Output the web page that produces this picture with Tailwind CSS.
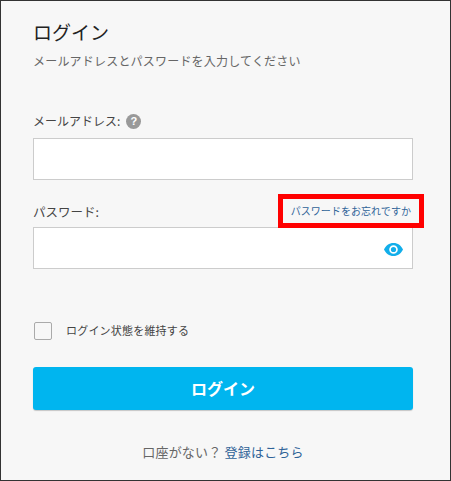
<!DOCTYPE html>
<html lang="ja">
<head>
  <meta charset="UTF-8" />
  <title>ログイン</title>
  <script src="https://cdn.jsdelivr.net/npm/@tailwindcss/browser@4"></script>
</head>
<body class="bg-white">
  <div class="w-[451px] h-[481px] bg-[#f7f7f7] border border-[#333333] px-[32px] pt-[20px] overflow-hidden font-['Noto_Sans_CJK_JP','Liberation_Sans',sans-serif]">
    <h1 class="text-[19px] leading-[22px] text-[#222222] font-normal">ログイン</h1>
    <p class="mt-[9px] text-[12px] leading-[18px] text-[#666666] tracking-[0.2px]">メールアドレスとパスワードを入力してください</p>

    <div class="mt-[41px] flex items-center gap-[6px] h-[20px]">
      <label class="text-[12px] text-[#444444]">メールアドレス:</label>
      <span class="w-[15px] h-[15px] rounded-full bg-[#999999] text-white text-[11px] leading-[15px] font-bold text-center font-['Liberation_Sans',sans-serif]">?</span>
    </div>
    <div class="mt-[7px] w-[380px] h-[42px] bg-white border border-[#cccccc]"></div>

    <div class="mt-[14px] flex items-center justify-between w-[380px] h-[33px]">
      <label class="pt-[3px] text-[12.5px] text-[#444444]">パスワード:</label>
      <a class="relative z-10 mr-[-6px] text-[10px] text-[#2f6398] outline-[5px] outline-[#ff0000] px-[8px] py-[5px] leading-[14px] tracking-[0.05px]" href="#">パスワードをお忘れですか</a>
    </div>
    <div class="relative w-[380px] h-[42px] bg-white border border-[#cccccc]">
      <svg class="absolute right-[9px] top-[15px]" width="19" height="13" viewBox="0 0 19 13">
        <path fill="#12aeea" fill-rule="evenodd" d="M9.5 0C5.2 0 1.6 2.7 0 6.5 1.6 10.3 5.2 13 9.5 13s7.9-2.7 9.500-6.500C17.400 2.700 13.800 0 9.500 0zm0 10.800a4.300 4.300 0 1 1 0-8.600 4.300 4.300 0 0 1 0 8.600zm0-6.900a2.600 2.600 0 1 0 0 5.200 2.600 2.600 0 0 0 0-5.200z"/>
      </svg>
    </div>

    <div class="mt-[52px] flex items-center gap-[14px] h-[20px] pl-[1px]">
      <span class="w-[18px] h-[18px] rounded-[2px] border border-[#aaaaaa] bg-[#f7f7f7]"></span>
      <span class="mb-[2px] text-[11px] tracking-[0.2px] text-[#444444]">ログイン状態を維持する</span>
    </div>

    <button class="mt-[26px] block w-[380px] h-[43px] pb-[2px] rounded-[3px] bg-[#00b5ef] text-white text-[16px] font-bold shadow-[0_1px_1px_rgba(0,0,0,0.2)]">ログイン</button>

    <p class="mt-[33px] text-center text-[13px] leading-[18px] text-[#666666] w-[380px] tracking-[0.2px]">口座がない？ <a class="text-[#2f6398]" href="#">登録はこちら</a></p>
  </div>
</body>
</html>
